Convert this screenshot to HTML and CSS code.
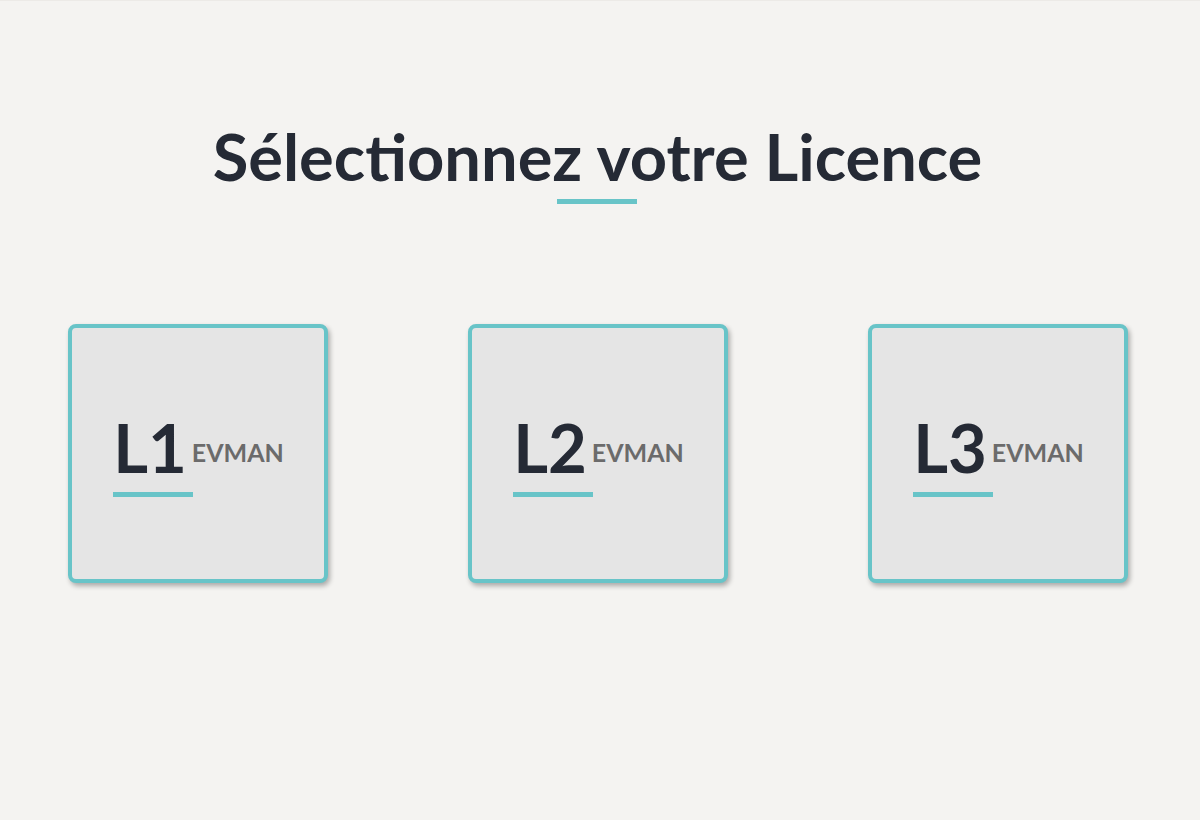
FILE: index.html
```html
<!DOCTYPE html>
<html lang="fr">
<head>
<meta charset="utf-8">
<title>Sélectionnez votre Licence</title>
<link rel="stylesheet" href="styles.css">
</head>
<body>
<main class="page">
  <header class="head">
    <h1 class="title">Sélectionnez votre Licence</h1>
    <span class="bar"></span>
  </header>
  <section class="cards">
    <a class="card" href="#">
      <div class="label">
        <div class="name"><span class="lvl">L1</span><span class="sub">EVMAN</span></div>
        <span class="bar small"></span>
      </div>
    </a>
    <a class="card" href="#">
      <div class="label">
        <div class="name"><span class="lvl">L2</span><span class="sub">EVMAN</span></div>
        <span class="bar small"></span>
      </div>
    </a>
    <a class="card" href="#">
      <div class="label">
        <div class="name"><span class="lvl">L3</span><span class="sub">EVMAN</span></div>
        <span class="bar small"></span>
      </div>
    </a>
  </section>
</main>
</body>
</html>
```
FILE: styles.css
```css
* { box-sizing: border-box; }
html, body {
  margin: 0;
  padding: 0;
  height: 100%;
}
body {
  background: #f4f3f1;
  font-family: Lato, "Open Sans", "Liberation Sans", sans-serif;
  color: #252a35;
  border-top: 1px solid #eceae7;
}
.page {
  display: flex;
  flex-direction: column;
  align-items: center;
  padding-right: 5px;
}
.head {
  display: flex;
  flex-direction: column;
  align-items: center;
  padding-top: 115px;
}
.title {
  margin: 0;
  font-size: 65px;
  font-weight: 700;
  line-height: 80px;
  color: #252a35;
  letter-spacing: 0;
}
.bar {
  display: block;
  width: 80px;
  height: 5px;
  background: #68c4c8;
  margin-top: 3px;
}
.cards {
  display: flex;
  gap: 140px;
  margin-top: 120px;
}
.card {
  width: 260px;
  height: 259px;
  border: 4px solid #68c4c8;
  border-radius: 8px;
  background: #e5e5e5;
  box-shadow: 2px 3px 5px rgba(0,0,0,0.3);
  display: flex;
  align-items: center;
  justify-content: center;
  text-decoration: none;
}
.label {
  display: flex;
  flex-direction: column;
  align-items: flex-start;
  margin-top: 4px;
  margin-left: 2px;
}
.name {
  display: block;
  line-height: 66px;
  height: 66px;
  white-space: nowrap;
}
.lvl {
  font-size: 67px;
  font-weight: 700;
  line-height: 66px;
  color: #252a35;
  vertical-align: baseline;
}
.sub {
  font-size: 25px;
  font-weight: 700;
  color: #6b6b6b;
  margin-left: 5px;
  vertical-align: 11px;
  line-height: 1;
}
.bar.small {
  margin-top: 12px;
}
```
